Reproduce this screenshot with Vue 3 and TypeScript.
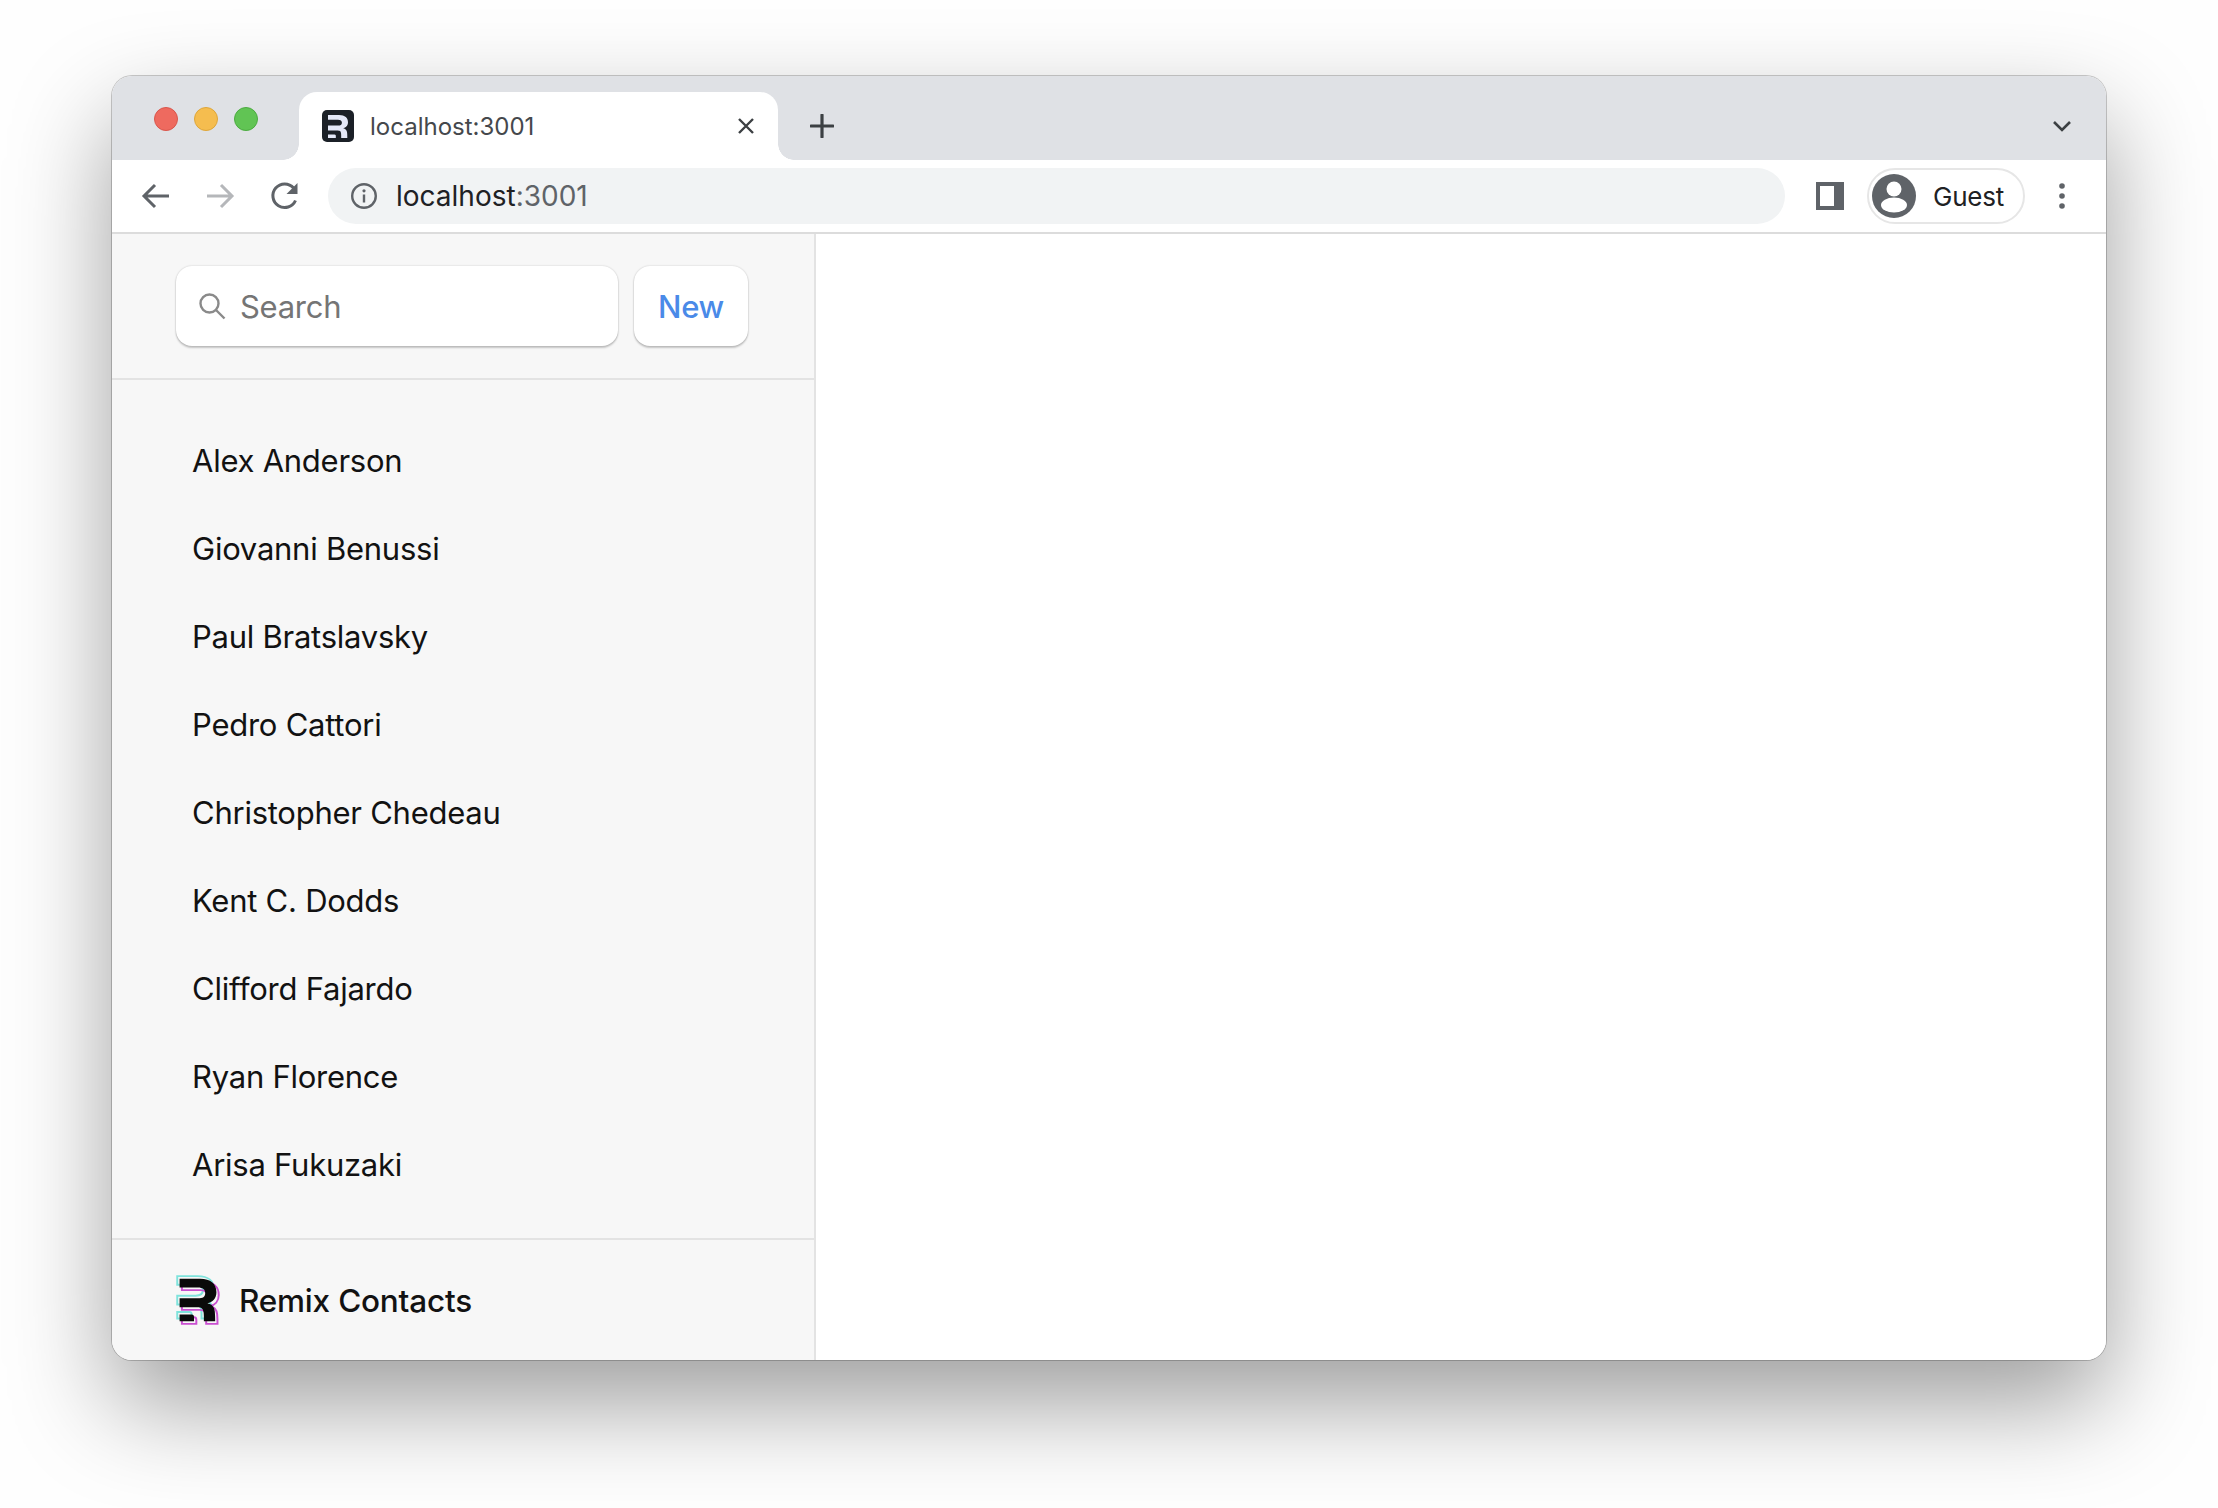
<script setup lang="ts">
const contacts: string[] = [
  'Alex Anderson',
  'Giovanni Benussi',
  'Paul Bratslavsky',
  'Pedro Cattori',
  'Christopher Chedeau',
  'Kent C. Dodds',
  'Clifford Fajardo',
  'Ryan Florence',
  'Arisa Fukuzaki',
]
const rMain =
  'M392.946 364.768C397.201 419.418 397.201 445.036 397.201 473H270.756C270.756 466.909 270.865 461.337 270.975 455.687C271.317 438.123 271.674 419.807 268.828 382.819C265.067 328.667 241.748 316.634 198.871 316.634H160.883H0V218.109H204.889C259.05 218.109 286.13 201.633 286.13 158.011C286.13 119.654 259.05 96.4098 204.889 96.4098H0V0H227.456C350.069 0 411 57.9117 411 150.42C411 219.613 368.13 264.739 310.22 272.26C359.105 282.037 387.683 309.865 392.946 364.768Z'
const rFoot = 'M0 473V399.553H133.697C156.029 399.553 160.878 416.116 160.878 425.994V473H0Z'
</script>

<template>
  <div class="page">
    <div class="window">
      <div class="strip">
        <div class="lights">
          <span class="light red"></span>
          <span class="light yellow"></span>
          <span class="light green"></span>
        </div>
        <div class="tab">
          <span class="favicon">
            <svg viewBox="0 0 411 473" width="20" height="23">
              <path :d="rMain" fill="#e4e8f8" />
              <path :d="rFoot" fill="#e4e8f8" />
            </svg>
          </span>
          <span class="tab-title">localhost:3001</span>
          <svg class="tab-close" viewBox="0 0 18 18" width="18" height="18">
            <path d="M2 2 16 16M16 2 2 16" stroke="#3c4043" stroke-width="2.4" fill="none" />
          </svg>
        </div>
        <svg class="tab-plus" viewBox="0 0 24 24" width="24" height="24">
          <path d="M12 1v22M1 12h22" stroke="#3c4043" stroke-width="3.2" stroke-linecap="round" fill="none" />
        </svg>
        <svg class="tab-menu" viewBox="0 0 20 12" width="20" height="12">
          <path d="M2 2 10 10 18 2" stroke="#3c4043" stroke-width="2.6" fill="none" />
        </svg>
      </div>

      <div class="toolbar">
        <svg class="nav" viewBox="0 0 32 32" width="32" height="32">
          <path d="M29 16H5M15 5 4 16l11 11" stroke="#5f6368" stroke-width="3" fill="none" />
        </svg>
        <svg class="nav" viewBox="0 0 32 32" width="32" height="32">
          <path d="M3 16h24M17 5l11 11-11 11" stroke="#b5b7ba" stroke-width="3" fill="none" />
        </svg>
        <svg class="nav reload" viewBox="0 0 32 32" width="32" height="32">
          <path d="M26.5 20.5A11.8 11.8 0 1 1 24.6 8" stroke="#5f6368" stroke-width="3" fill="none" />
          <path d="M28.5 3v11h-11z" fill="#5f6368" />
        </svg>
        <div class="omnibox">
          <svg class="info" viewBox="0 0 28 28" width="28" height="28">
            <circle cx="14" cy="14" r="11.8" stroke="#5f6368" stroke-width="2.4" fill="none" />
            <path d="M14 12.5v8" stroke="#5f6368" stroke-width="2.4" fill="none" />
            <circle cx="14" cy="8.8" r="1.6" fill="#5f6368" />
          </svg>
          <span class="url"><span class="host">localhost</span><span class="port">:3001</span></span>
        </div>
        <svg class="panel" viewBox="0 0 28 28" width="28" height="28">
          <path fill-rule="evenodd" d="M0 0h28v28H0zM4 4v20h14V4z" fill="#5f6368" />
        </svg>
        <div class="profile">
          <svg viewBox="0 0 44 44" width="44" height="44">
            <circle cx="22" cy="22" r="22" fill="#5f6368" />
            <circle cx="22" cy="15" r="7.5" fill="#fff" />
            <ellipse cx="22" cy="31" rx="13" ry="7.5" fill="#fff" />
          </svg>
          <span class="guest">Guest</span>
        </div>
        <svg class="dots" viewBox="0 0 8 28" width="8" height="28">
          <circle cx="4" cy="4" r="2.8" fill="#5f6368" />
          <circle cx="4" cy="14" r="2.8" fill="#5f6368" />
          <circle cx="4" cy="24" r="2.8" fill="#5f6368" />
        </svg>
      </div>

      <div class="content">
        <aside class="sidebar">
          <div class="side-head">
            <div class="search">
              <svg viewBox="0 0 28 28" width="28" height="28">
                <circle cx="11.5" cy="11.5" r="9" stroke="#8a8a8a" stroke-width="2.4" fill="none" />
                <path d="M18 18l8.5 8.5" stroke="#8a8a8a" stroke-width="2.4" fill="none" />
              </svg>
              <span class="placeholder">Search</span>
            </div>
            <div class="new-btn">New</div>
          </div>
          <ul class="list">
            <li v-for="name in contacts" :key="name" class="item">{{ name }}</li>
          </ul>
          <div class="side-foot">
            <svg class="logo" viewBox="-40 -40 491 553" width="44" height="50">
              <g transform="translate(-26 -30)" fill="none" stroke="#7fe3dc" stroke-width="22">
                <path :d="rMain" /><path :d="rFoot" />
              </g>
              <g transform="translate(26 30)" fill="none" stroke="#c94fd0" stroke-width="22">
                <path :d="rMain" /><path :d="rFoot" />
              </g>
              <path :d="rMain" fill="#0a0a0a" />
              <path :d="rFoot" fill="#0a0a0a" />
            </svg>
            <span class="brand">Remix Contacts</span>
          </div>
        </aside>
        <main class="detail"></main>
      </div>
    </div>
  </div>
</template>

<style>
html,
body {
  margin: 0;
  background: #fefefe;
}
</style>

<style scoped>
.page {
  width: 2218px;
  height: 1508px;
  box-sizing: border-box;
  padding: 76px 112px 0;
  overflow: hidden;
  font-family: Inter, "Liberation Sans", sans-serif;
}
.window {
  width: 1994px;
  height: 1284px;
  display: flex;
  flex-direction: column;
  border-radius: 20px;
  overflow: hidden;
  box-shadow: 0 44px 100px rgba(0, 0, 0, 0.38), 0 0 0 1px rgba(0, 0, 0, 0.2);
  background: #fff;
}
.strip {
  height: 84px;
  flex: none;
  display: flex;
  align-items: flex-end;
  padding-left: 42px;
  background: #dfe1e5;
}
.lights {
  display: flex;
  gap: 16px;
  margin-bottom: 29px;
}
.light {
  width: 24px;
  height: 24px;
  border-radius: 50%;
  box-sizing: border-box;
}
.red {
  background: #ee6a5f;
  border: 1px solid #d9564c;
}
.yellow {
  background: #f5bd4f;
  border: 1px solid #dea63a;
}
.green {
  background: #61c454;
  border: 1px solid #4cab40;
}
.tab {
  position: relative;
  width: 479px;
  height: 68px;
  margin-left: 41px;
  box-sizing: border-box;
  padding: 0 23px 0 23px;
  display: flex;
  align-items: center;
  background: #fff;
  border-radius: 18px 18px 0 0;
}
.tab::before,
.tab::after {
  content: "";
  position: absolute;
  bottom: 0;
  width: 16px;
  height: 16px;
}
.tab::before {
  left: -16px;
  background: radial-gradient(circle at 0 0, transparent 15.5px, #fff 16px);
}
.tab::after {
  right: -16px;
  background: radial-gradient(circle at 100% 0, transparent 15.5px, #fff 16px);
}
.favicon {
  width: 32px;
  height: 32px;
  flex: none;
  border-radius: 5px;
  background: #1b2027;
  display: flex;
  align-items: center;
  justify-content: center;
}
.tab-title {
  margin-left: 16px;
  flex: 1;
  font-size: 24px;
  color: #45484c;
  white-space: nowrap;
}
.tab-close {
  flex: none;
}
.tab-plus {
  margin: 0 0 22px 32px;
  flex: none;
}
.tab-menu {
  margin: 0 34px 28px auto;
  flex: none;
}
.toolbar {
  height: 74px;
  flex: none;
  box-sizing: border-box;
  border-bottom: 2px solid #dcdcdc;
  padding: 8px 30px 8px 28px;
  display: flex;
  align-items: center;
  gap: 32px;
  background: #fff;
}
.nav {
  flex: none;
}
.reload {
  margin-left: 1px;
  margin-right: -1px;
}
.omnibox {
  width: 1457px;
  height: 56px;
  flex: none;
  margin-left: -4px;
  box-sizing: border-box;
  padding-left: 22px;
  display: flex;
  align-items: center;
  border-radius: 28px;
  background: #f1f3f4;
}
.info {
  flex: none;
}
.url {
  margin-left: 18px;
  font-size: 28px;
  white-space: nowrap;
}
.host {
  color: #202124;
}
.port {
  color: #5f6368;
}
.panel {
  flex: none;
  margin-left: -1px;
}
.profile {
  width: 158px;
  height: 56px;
  flex: none;
  margin-left: -9px;
  box-sizing: border-box;
  border: 2px solid #e6e6e6;
  border-radius: 28px;
  padding-left: 3px;
  display: flex;
  align-items: center;
}
.guest {
  margin-left: 17px;
  font-size: 26px;
  letter-spacing: -0.2px;
  color: #202124;
}
.dots {
  flex: none;
  margin-left: 1px;
}
.content {
  flex: 1;
  min-height: 0;
  display: flex;
}
.sidebar {
  width: 704px;
  flex: none;
  box-sizing: border-box;
  border-right: 2px solid #e3e3e3;
  background: #f7f7f7;
  display: flex;
  flex-direction: column;
}
.side-head {
  height: 146px;
  flex: none;
  box-sizing: border-box;
  border-bottom: 2px solid #e3e3e3;
  padding: 32px 0 0 64px;
  display: flex;
  align-items: flex-start;
  gap: 16px;
}
.search {
  width: 442px;
  height: 80px;
  box-sizing: border-box;
  padding-left: 22px;
  display: flex;
  align-items: center;
  gap: 14px;
  background: #fff;
  border-radius: 16px;
  box-shadow: 0 0 2px rgba(0, 0, 0, 0.2), 0 2px 2px rgba(0, 0, 0, 0.2);
}
.placeholder {
  font-size: 31px;
  letter-spacing: -0.28px;
  color: #757575;
}
.new-btn {
  width: 114px;
  height: 80px;
  display: flex;
  align-items: center;
  justify-content: center;
  font-size: 31px;
  letter-spacing: -0.28px;
  font-weight: 500;
  color: #4a8ae8;
  background: #fff;
  border-radius: 16px;
  box-shadow: 0 0 2px rgba(0, 0, 0, 0.2), 0 2px 2px rgba(0, 0, 0, 0.2);
}
.list {
  flex: 1;
  margin: 0;
  list-style: none;
  padding: 36px 0 0 80px;
}
.item {
  height: 88px;
  display: flex;
  align-items: center;
  font-size: 31px;
  letter-spacing: -0.25px;
  color: #121212;
}
.side-foot {
  height: 122px;
  flex: none;
  box-sizing: border-box;
  border-top: 2px solid #e3e3e3;
  padding-left: 64px;
  display: flex;
  align-items: center;
  gap: 19px;
}
.logo {
  flex: none;
}
.brand {
  font-size: 31.5px;
  letter-spacing: -0.2px;
  font-weight: 500;
  color: #121212;
}
.detail {
  flex: 1;
  background: #fff;
}
</style>
